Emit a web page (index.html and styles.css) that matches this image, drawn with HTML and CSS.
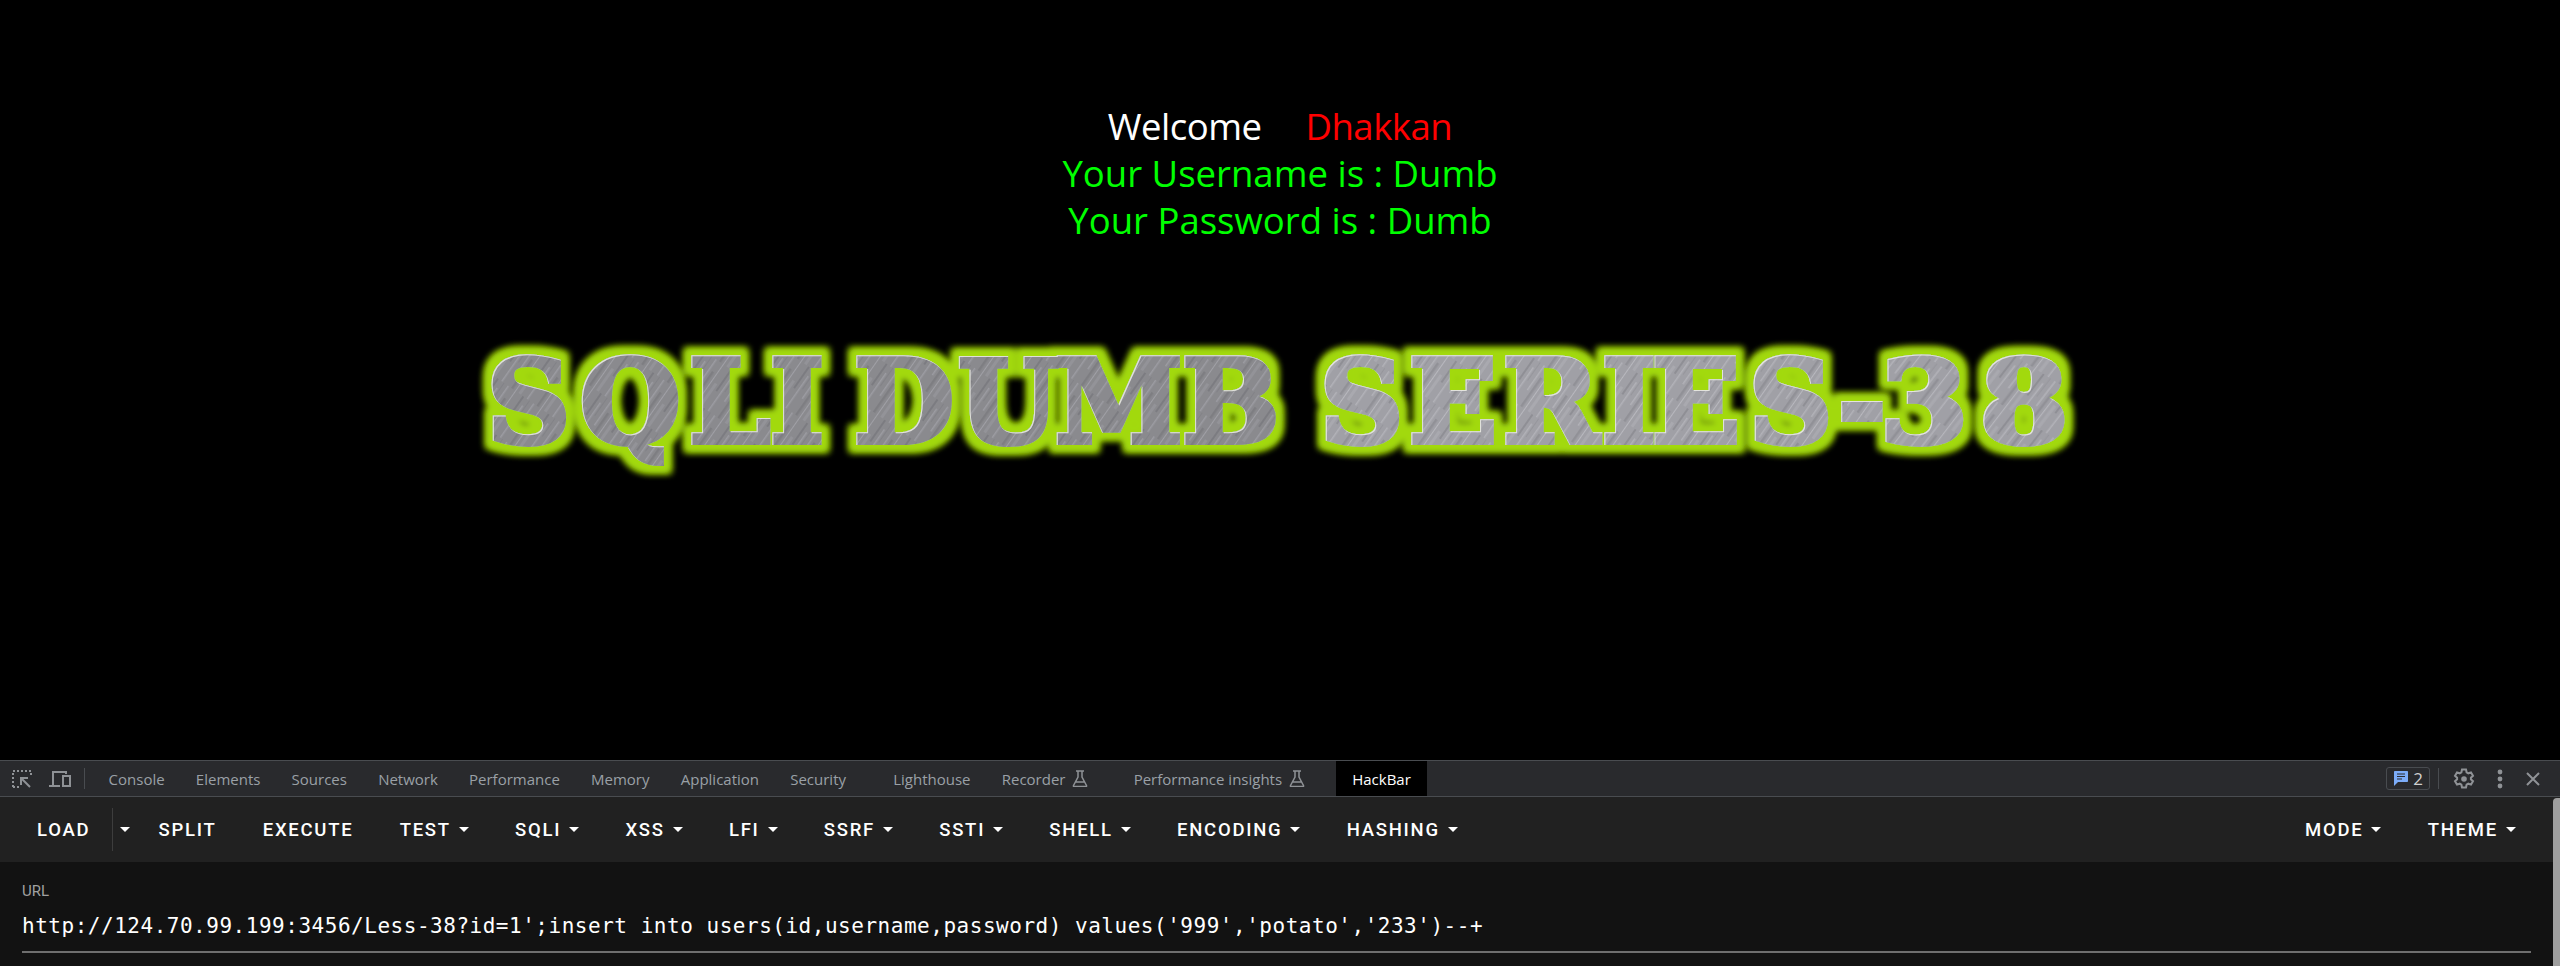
FILE: index.html
```html
<!DOCTYPE html>
<html lang="en">

<head>
    <meta charset="UTF-8">
    <meta name="viewport" content="width=device-width, initial-scale=1.0">
    <title>Less-38</title>
    <link rel="stylesheet" href="styles.css">
</head>

<body>
    <main class="page">
        <div class="login">
            <div class="welcome"><span>Welcome</span><span class="name">Dhakkan</span></div>
            <div class="result">Your Username is : Dumb</div>
            <div class="result">Your Password is : Dumb</div>
        </div>
        <svg class="logo" width="1700" height="150" viewBox="0 0 1700 150">
            <defs>
                <pattern id="steel-dark" width="31" height="47" patternUnits="userSpaceOnUse" patternTransform="rotate(35)">
                    <rect width="31" height="47" fill="#8a8a8e" />
                    <rect x="2" width="1.500" height="30" fill="#9c9ca2" />
                    <rect x="6" y="12" width="2.500" height="35" fill="#7e7e82" />
                    <rect x="11" width="1" height="47" fill="#a0a0a6" />
                    <rect x="15" y="20" width="3" height="27" fill="#939398" />
                    <rect x="20" width="2" height="26" fill="#7c7c81" />
                    <rect x="25" y="8" width="1.500" height="39" fill="#9c9ca2" />
                    <rect x="28" width="1" height="22" fill="#828287" />
                </pattern>
                <pattern id="steel-light" width="31" height="47" patternUnits="userSpaceOnUse" patternTransform="rotate(35)">
                    <rect width="31" height="47" fill="#a0a0a6" />
                    <rect x="2" width="1.500" height="30" fill="#b2b2b8" />
                    <rect x="6" y="12" width="2.500" height="35" fill="#919197" />
                    <rect x="11" width="1" height="47" fill="#b8b8be" />
                    <rect x="15" y="20" width="3" height="27" fill="#a9a9af" />
                    <rect x="20" width="2" height="26" fill="#8f8f95" />
                    <rect x="25" y="8" width="1.500" height="39" fill="#b2b2b8" />
                    <rect x="28" width="1" height="22" fill="#96969c" />
                </pattern>
                <filter id="glow" x="-3%" y="-30%" width="106%" height="160%">
                    <feMorphology in="SourceAlpha" operator="dilate" radius="7" result="fat" />
                    <feGaussianBlur in="fat" stdDeviation="3.800" result="soft" />
                    <feFlood flood-color="#a2d90c" />
                    <feComposite in2="soft" operator="in" result="halo" />
                    <feOffset in="SourceAlpha" dx="1" dy="1" result="moved" />
                    <feFlood flood-color="#f0f0e8" flood-opacity="0.800" />
                    <feComposite in2="SourceAlpha" operator="in" result="edgefill" />
                    <feComposite in="edgefill" in2="moved" operator="out" result="edge" />
                    <feMerge>
                        <feMergeNode in="halo" />
                        <feMergeNode in="halo" />
                        <feMergeNode in="SourceGraphic" />
                        <feMergeNode in="edge" />
                    </feMerge>
                </filter>
            </defs>
            <g class="logo-text" filter="url(#glow)">
                <text class="dark" x="57 150 259 340 400 424 528 625 752" y="111">SQLI DUMB</text>
                <text class="light" x="890 979 1073 1172 1222 1319 1408" y="111">SERIES-</text>
                <text class="light" transform="translate(1450 111) scale(1.100 1)" x="0 91">38</text>
            </g>
        </svg>
    </main>

    <section class="devtools">
        <nav class="tabs">
            <button class="tool" aria-label="Inspect">
                <svg width="20" height="18" viewBox="0 0 20 18" fill="none" stroke="#8f9296" stroke-width="2">
                    <path d="M1 17V1h18v5" stroke-dasharray="2 2" />
                    <path d="M1 17h6" stroke-dasharray="2 2" />
                    <path d="M18 17 9.500 8.500" />
                    <path d="M9 15V8h7" />
                </svg>
            </button>
            <button class="tool" aria-label="Device">
                <svg width="22" height="16" viewBox="0 0 22 16" fill="none" stroke="#8f9296" stroke-width="2">
                    <path d="M4 14V1h13v2" />
                    <path d="M0 15h11" />
                    <rect x="14" y="5" width="7" height="10" />
                </svg>
            </button>
            <span class="sep"></span>
            <a class="tab">Console</a>
            <a class="tab">Elements</a>
            <a class="tab">Sources</a>
            <a class="tab">Network</a>
            <a class="tab">Performance</a>
            <a class="tab">Memory</a>
            <a class="tab">Application</a>
            <a class="tab">Security</a>
            <a class="tab spaced">Lighthouse</a>
            <a class="tab">Recorder
                <svg class="flask" width="16" height="17" viewBox="0 0 16 17" fill="none" stroke="#8f9296" stroke-width="1.500">
                    <path d="M4 1h8M6 1v6L1.500 15.500c-.3.600 0 1 .6 1h11.800c.6 0 .9-.4.6-1L10 7V1M4 12h8" />
                </svg>
            </a>
            <a class="tab spaced-sm">Performance insights
                <svg class="flask" width="16" height="17" viewBox="0 0 16 17" fill="none" stroke="#8f9296" stroke-width="1.500">
                    <path d="M4 1h8M6 1v6L1.500 15.500c-.3.600 0 1 .6 1h11.800c.6 0 .9-.4.6-1L10 7V1M4 12h8" />
                </svg>
            </a>
            <a class="tab active">HackBar</a>

            <div class="tabs-right">
                <span class="badge">
                    <svg width="14" height="15" viewBox="0 0 14 15">
                        <path d="M0 1c0-.6.4-1 1-1h12c.6 0 1 .4 1 1v9c0 .6-.4 1-1 1H4l-4 4z" fill="#7cacf8" />
                        <path d="M3 3h8M3 5.500h8M3 8h5" stroke="#292a2d" stroke-width="1.200" />
                    </svg>
                    2
                </span>
                <span class="sep"></span>
                <svg class="gear" width="22" height="22" viewBox="0 0 22 22" fill="none" stroke="#8f9296" stroke-width="2">
                    <path d="M9 1.500h4l.6 2.800 1.700 1 2.700-.9 2 3.400-2.100 1.900v1.600l2.100 1.900-2 3.400-2.700-.9-1.700 1-.6 2.800H9l-.6-2.800-1.700-1-2.700.9-2-3.400 2.100-1.900v-1.600L2 7.800l2-3.400 2.700.9 1.700-1z" />
                    <circle cx="11" cy="11" r="2.800" fill="#8f9296" stroke="none" />
                </svg>
                <svg class="kebab" width="6" height="20" viewBox="0 0 6 20" fill="#8f9296">
                    <circle cx="3" cy="3" r="2.400" />
                    <circle cx="3" cy="10" r="2.400" />
                    <circle cx="3" cy="17" r="2.400" />
                </svg>
                <svg class="close" width="14" height="14" viewBox="0 0 14 14" stroke="#8f9296" stroke-width="2">
                    <path d="M1 1l12 12M13 1 1 13" />
                </svg>
            </div>
        </nav>

        <div class="toolbar">
            <button class="btn split-left">LOAD</button>
            <button class="btn caret-only"><i class="caret"></i></button>
            <button class="btn">SPLIT</button>
            <button class="btn">EXECUTE</button>
            <button class="btn">TEST<i class="caret"></i></button>
            <button class="btn">SQLI<i class="caret"></i></button>
            <button class="btn">XSS<i class="caret"></i></button>
            <button class="btn">LFI<i class="caret"></i></button>
            <button class="btn">SSRF<i class="caret"></i></button>
            <button class="btn">SSTI<i class="caret"></i></button>
            <button class="btn">SHELL<i class="caret"></i></button>
            <button class="btn">ENCODING<i class="caret"></i></button>
            <button class="btn">HASHING<i class="caret"></i></button>
            <button class="btn push">MODE<i class="caret"></i></button>
            <button class="btn">THEME<i class="caret"></i></button>
        </div>

        <div class="panel">
            <label class="url-label">URL</label>
            <div class="url-value">http://124.70.99.199:3456/Less-38?id=1';insert into users(id,username,password) values('999','potato','233')--+</div>
        </div>
        <div class="scrollbar"></div>
    </section>
</body>

</html>
```

FILE: styles.css
```css
html,
body {
    margin: 0;
    padding: 0;
    height: 966px;
    overflow: hidden;
    background: #000;
}

body {
    display: flex;
    flex-direction: column;
}

/* page under test */
.page {
    height: 760px;
    background: #000;
    display: flex;
    flex-direction: column;
    align-items: center;
}

.login {
    margin-top: 103px;
    font-family: "Open Sans", sans-serif;
    font-size: 36.500px;
    line-height: 47px;
    text-align: center;
}

.welcome {
    color: #fff;
    display: flex;
    justify-content: center;
    gap: 44px;
    letter-spacing: -0.500px;
}

.name {
    color: #f00;
}

.result {
    color: #0f0;
}

.logo {
    display: block;
    margin-top: 87px;
}

.logo-text {
    font-family: "DejaVu Serif", serif;
    font-weight: 700;
    font-size: 115px;
    stroke-width: 6px;
}

.logo-text .dark {
    fill: url(#steel-dark);
    stroke: url(#steel-dark);
}

.logo-text .light {
    fill: url(#steel-light);
    stroke: url(#steel-light);
}

/* devtools */
.devtools {
    position: relative;
    flex: 1;
    display: flex;
    flex-direction: column;
}

.tabs {
    height: 35px;
    display: flex;
    align-items: center;
    background: #292a2d;
    border-top: 1px solid #494c50;
    border-bottom: 1px solid #494c50;
    font-family: "Open Sans", sans-serif;
    font-size: 15px;
    color: #9aa0a6;
}

.tool {
    display: flex;
    padding: 0;
    border: 0;
    background: none;
    margin-left: 12px;
}

.tool + .tool {
    margin-left: 17px;
}

.sep {
    width: 1px;
    height: 21px;
    background: #494c50;
    margin-left: 13px;
}

.tab {
    display: flex;
    align-items: center;
    height: 100%;
    padding: 0 15.600px;
    white-space: nowrap;
}

.sep + .tab {
    margin-left: 8px;
}

.tab.spaced {
    margin-left: 16px;
}

.tab.spaced-sm {
    margin-left: 14px;
}

.flask {
    margin-left: 7px;
}

.tab.active {
    background: #000;
    color: #fff;
    margin-left: 15.500px;
    padding: 0 16px;
}

.tabs-right {
    margin-left: auto;
    display: flex;
    align-items: center;
}

.badge {
    display: flex;
    align-items: center;
    gap: 5px;
    height: 21px;
    padding: 0 6px 0 7px;
    border: 1px solid #494c50;
    border-radius: 3px;
    color: #d0d0d0;
    font-size: 17px;
}

.tabs-right .sep {
    margin-left: 8px;
}

.gear {
    margin-left: 14px;
}

.kebab {
    margin-left: 22px;
}

.close {
    margin-left: 23px;
    margin-right: 20px;
}

.toolbar {
    height: 65px;
    display: flex;
    align-items: center;
    padding: 0 21px 0 14px;
    background: #212121;
}

.btn {
    display: flex;
    align-items: center;
    height: 43px;
    padding: 0 23.100px;
    border: 0;
    background: none;
    color: #fff;
    font-family: Roboto, sans-serif;
    font-weight: 500;
    font-size: 18.500px;
    letter-spacing: 1.750px;
}

.split-left {
    border-right: 1px solid #3d3d3d;
    padding-right: 22px;
}

.caret-only {
    padding: 0 5px 0 7px;
}

.caret {
    width: 0;
    height: 0;
    margin-left: 8px;
    border-left: 5px solid transparent;
    border-right: 5px solid transparent;
    border-top: 5px solid #fff;
}

.caret-only .caret {
    margin-left: 0;
}

.push {
    margin-left: auto;
}

.panel {
    flex: 1;
    background: #121212;
    padding: 0 29px 0 22px;
}

.url-label {
    display: block;
    margin-top: 20px;
    font-family: Roboto, sans-serif;
    font-size: 15px;
    line-height: 18px;
    color: #a0a0a0;
}

.url-value {
    margin-top: 11px;
    padding-bottom: 10px;
    border-bottom: 2px solid #6e6e6e;
    font-family: "DejaVu Sans Mono", monospace;
    font-size: 21px;
    letter-spacing: 0.520px;
    line-height: 30px;
    color: #fff;
    white-space: nowrap;
}

.scrollbar {
    position: absolute;
    top: 38px;
    right: 0;
    bottom: 0;
    width: 7px;
    background: #9e9e9e;
    border-top-left-radius: 4px;
}
```
